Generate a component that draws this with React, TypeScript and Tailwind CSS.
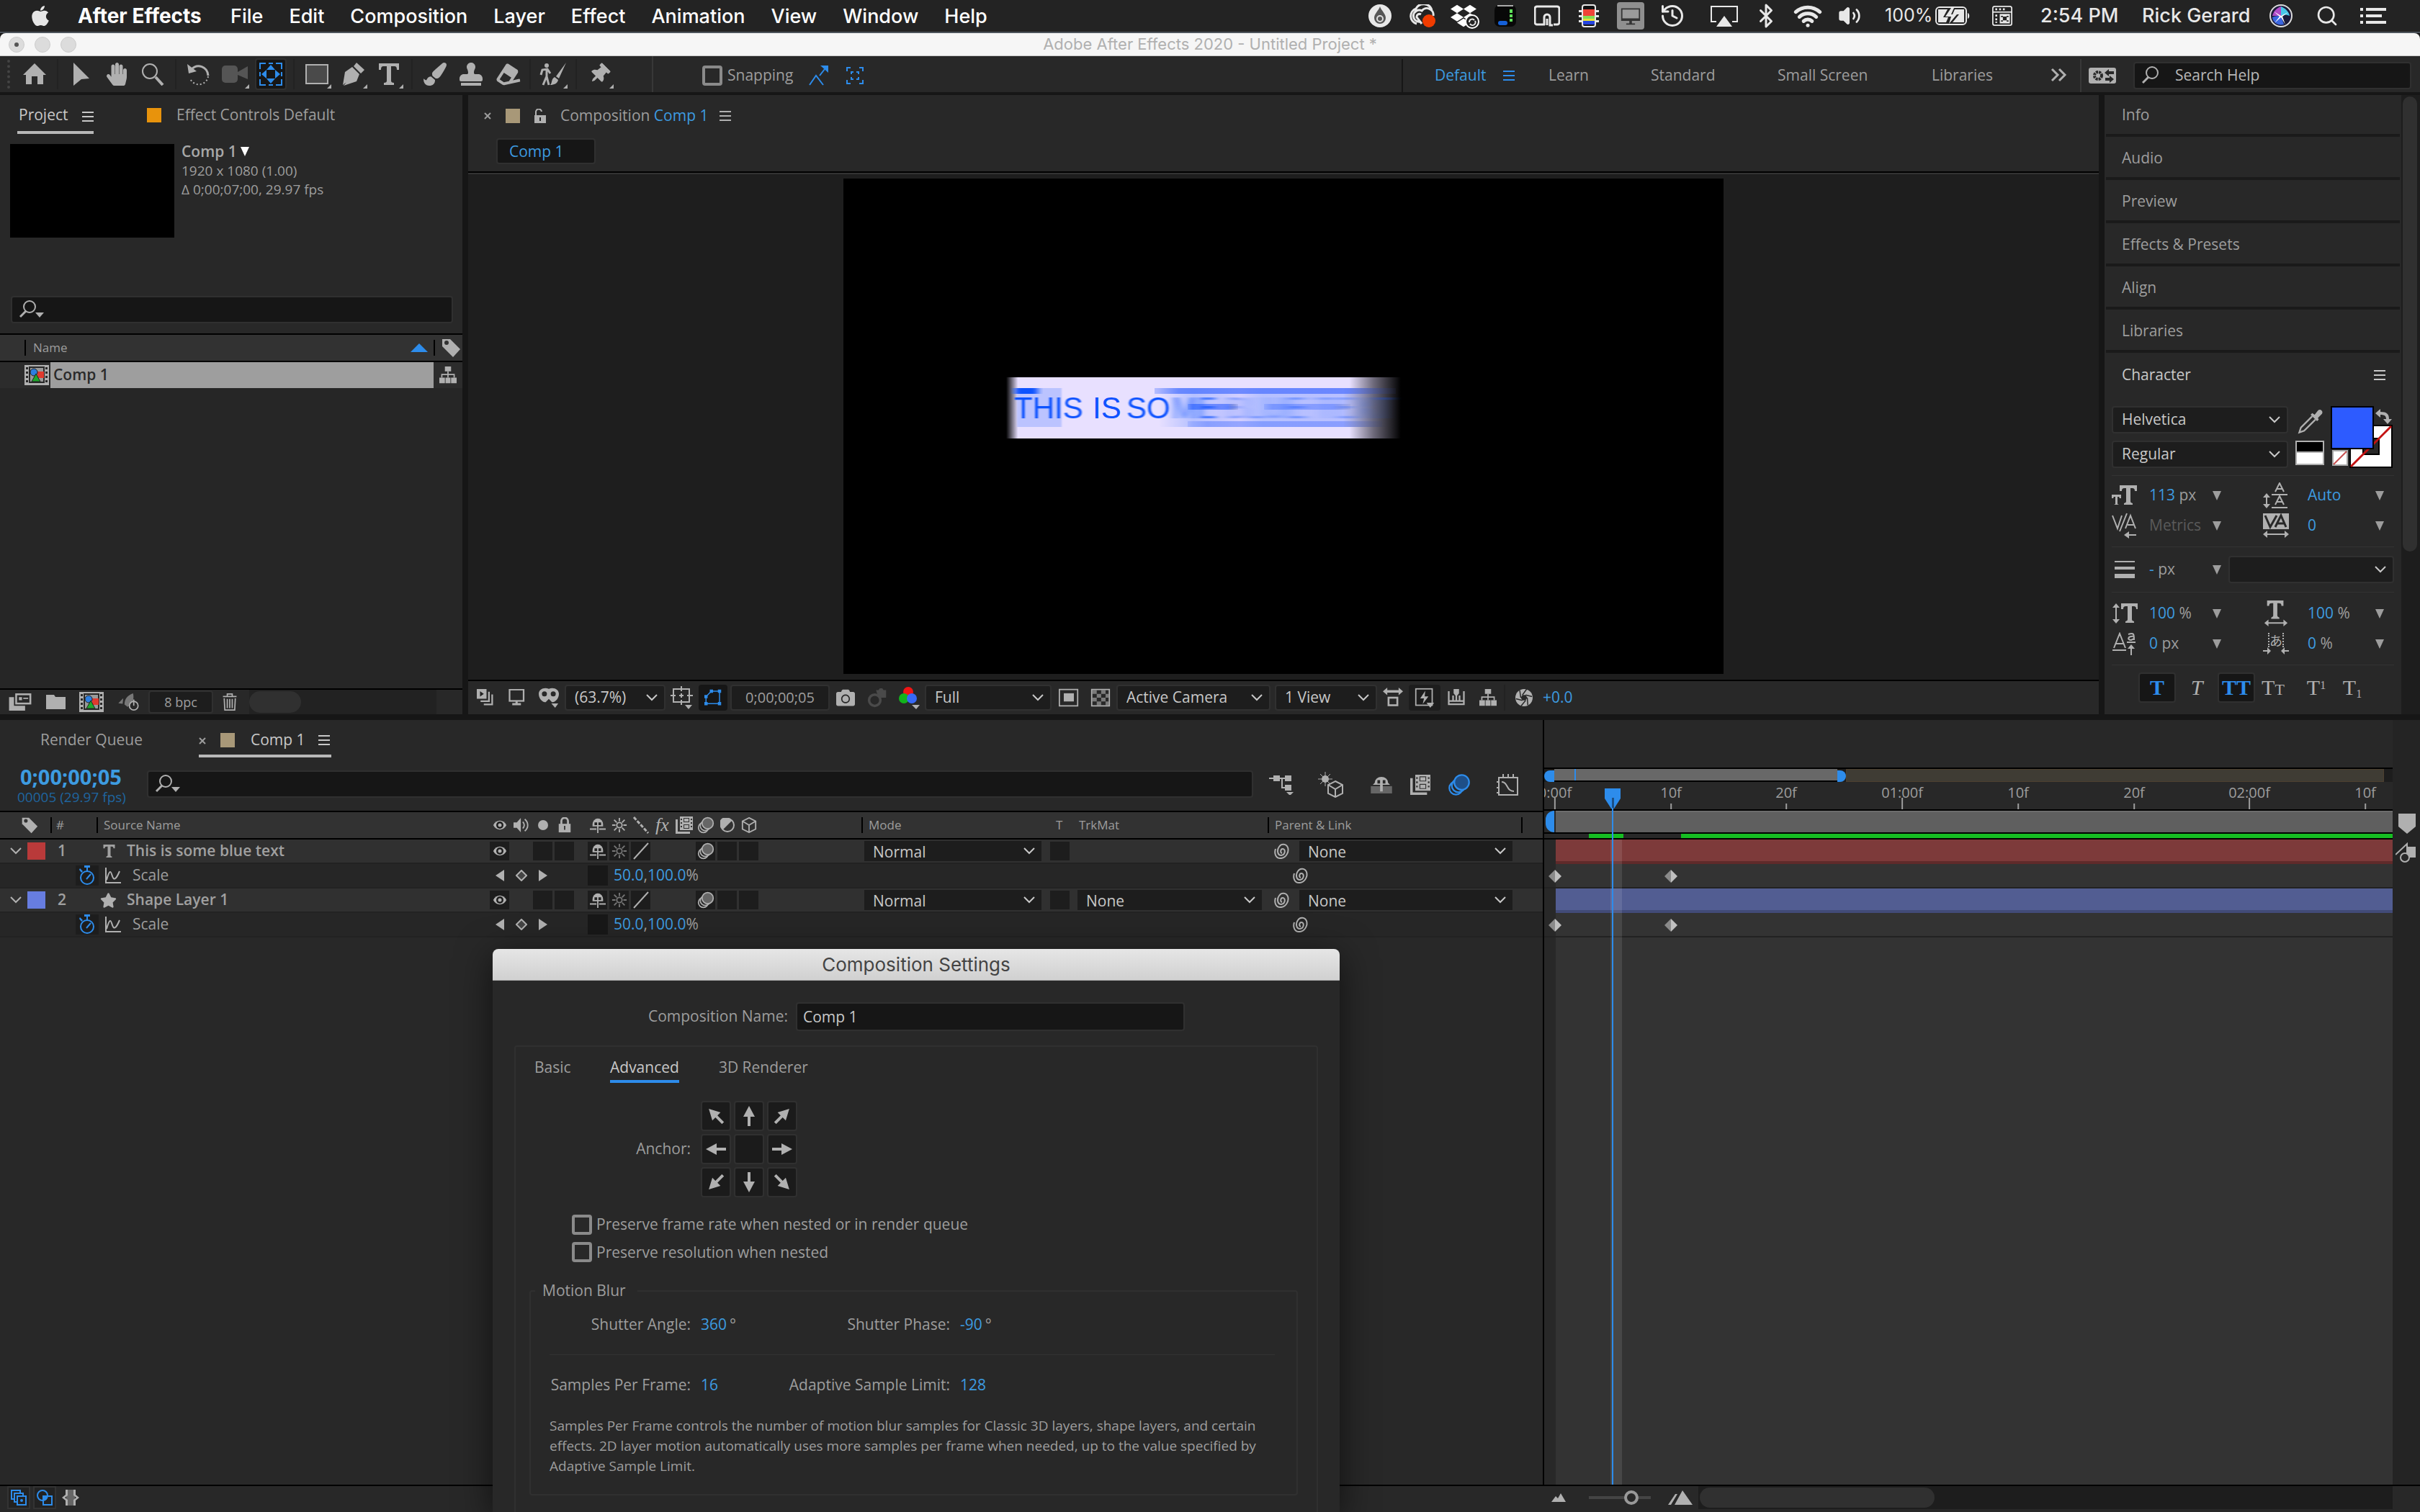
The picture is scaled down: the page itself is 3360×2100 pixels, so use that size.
import type { ReactNode } from "react";
import { Airplay, Bluetooth, History, Search, Volume2, Wifi } from "lucide-react";
import { FaApple, FaCamera, FaDropbox, FaEraser, FaHandPaper, FaPaintBrush, FaStamp, FaStar, FaThumbtack } from "react-icons/fa";

/* ---------- shared bits ---------- */

function Ico({ children, className = "size-8", box = "0 0 32 32" }: { children: ReactNode; className?: string; box?: string }) {
  return (
    <svg viewBox={box} className={`shrink-0 ${className}`} fill="currentColor" aria-hidden="true">
      {children}
    </svg>
  );
}

function Line({ d, w = 2, className = "" }: { d: string; w?: number; className?: string }) {
  return <path d={d} fill="none" stroke="currentColor" strokeWidth={w} className={className} />;
}

function Burger({ className = "" }: { className?: string }) {
  return (
    <Ico box="0 0 16 16" className={`size-4 ${className}`}>
      <path d="M0 1h16v2H0zM0 7h16v2H0zM0 13h16v2H0z" />
    </Ico>
  );
}

function Chevron({ className = "" }: { className?: string }) {
  return (
    <Ico box="0 0 16 16" className={`size-4 ${className}`}>
      <Line d="M1 4l7 7 7-7" />
    </Ico>
  );
}

function Down({ className = "w-3" }: { className?: string }) {
  return (
    <Ico box="0 0 12 13" className={`h-[13px] ${className}`}>
      <path d="M0 0h12L6 13z" />
    </Ico>
  );
}

function Dropdown({ label, value, className = "" }: { label: string; value: string; className?: string }) {
  return (
    <span className={`relative flex shrink-0 items-center bg-[#1d1d1d] text-[#c8c8c8] ${className}`}>
      <select aria-label={label} defaultValue={value} className="h-full w-full appearance-none bg-transparent pl-3 outline-none">
        <option>{value}</option>
      </select>
      <Chevron className="pointer-events-none absolute right-[9px]" />
    </span>
  );
}

function MagnifierIcon({ arrow = true }: { arrow?: boolean }) {
  return (
    <Ico box="0 0 36 28" className="h-7 w-9">
      <circle cx="14" cy="10" r="8" fill="none" stroke="currentColor" strokeWidth="2" />
      <Line d="M9 16L1 24" w={3} />
      {arrow && <path d="M22 18h12l-6 7z" />}
    </Ico>
  );
}

/* ---------- mac menu bar ---------- */

const menus = ["File", "Edit", "Composition", "Layer", "Effect", "Animation", "View", "Window", "Help"];

function StatusCell({ children, className = "" }: { children: ReactNode; className?: string }) {
  return <span className={`flex w-[58px] shrink-0 justify-center ${className}`}>{children}</span>;
}

function MenuBar() {
  return (
    <nav className="flex h-[46px] items-center border-b-2 border-[#4d545c] bg-[#232323] font-['Inter',sans-serif] text-[27px] text-white">
      <span className="flex w-[108px] pl-[40px]">
        <FaApple className="size-8 text-[#e6e6e6]" />
      </span>
      <div className="flex items-baseline gap-9">
        <button className="w-[176px] text-left text-[28px] font-bold whitespace-nowrap">After Effects</button>
        {menus.map((m) => (
          <button key={m} className="font-medium">
            {m}
          </button>
        ))}
      </div>
      <div className="ml-auto flex items-center pr-[42px] text-[#e8e8e8]">
        <StatusCell>
          <Ico>
            <circle cx="16" cy="16" r="16" />
            <path d="M16 3c2 6 8 10 8 16a8 8 0 0 1-16 0c0-6 6-10 8-16z" fill="#555" />
            <circle cx="16" cy="20" r="4" fill="none" stroke="#ddd" strokeWidth="2" />
          </Ico>
        </StatusCell>
        <StatusCell>
          <Ico className="h-8 w-10" box="0 0 40 32">
            <Line d="M18 24a8 8 0 1 1 2-15 9 9 0 0 1 16 7M13 27A11 11 0 0 1 12 6 12 12 0 0 1 34 8M20 27l-7-9a4 4 0 0 1 6-4" w={3} />
            <circle cx="30" cy="23" r="9" fill="#f03c00" />
          </Ico>
        </StatusCell>
        <StatusCell>
          <span className="relative flex">
            <FaDropbox className="size-9 text-white" />
            <Ico className="absolute -right-1 bottom-0 size-5" box="0 0 20 20">
              <circle cx="10" cy="10" r="9" fill="#232323" stroke="#fff" strokeWidth="2" />
              <Line d="M6 11a4 4 0 0 1 7-3M14 9a4 4 0 0 1-7 4" />
            </Ico>
          </span>
        </StatusCell>
        <StatusCell>
          <Ico>
            <rect x="1" y="1" width="30" height="30" rx="7" fill="#080808" />
            <path d="M5 1h22v2H5z" fill="#aaa" />
            <path d="M22 7h4v5h-4zM22 14h4v4h-4zM22 20h4v4h-4z" fill="#5fe05a" />
            <rect x="6" y="23" width="13" height="6" rx="3" fill="#1560d8" />
          </Ico>
        </StatusCell>
        <StatusCell>
          <Ico className="size-9" box="0 0 36 30">
            <Line d="M15 27H4a3 3 0 0 1-3-3V5a3 3 0 0 1 3-3h28a3 3 0 0 1 3 3v19a3 3 0 0 1-3 3h-5" w={3} />
            <Line d="M14 28V17a4 4 0 0 1 8 0M18 28v-9M22 17v11h4" w={3} />
          </Ico>
        </StatusCell>
        <StatusCell>
          <Ico>
            <path d="M2 8h28v3H2zM2 15h28v3H2zM2 22h28v3H2z" />
            <rect x="6" y="0" width="20" height="32" rx="4" />
            <rect x="8" y="2" width="16" height="28" rx="2" fill="#111" />
            <path d="M8 7h16v9H8z" fill="#f04438" />
            <path d="M8 16h16v4H8z" fill="#86dc52" />
            <path d="M8 20h16v3H8z" fill="#e6e23c" />
            <path d="M8 23h16v5H8z" fill="#2544e0" />
          </Ico>
        </StatusCell>
        <StatusCell>
          <span className="flex h-[38px] w-[38px] items-center justify-center rounded bg-[#8f8f8f] text-[#333]">
            <Ico className="size-7">
              <path d="M1 4h30v20H1z" />
              <path d="M3 6h26v14H3z" fill="#9b9b9b" />
              <path d="M14 24h4v4h5v2H9v-2h5z" />
            </Ico>
          </span>
        </StatusCell>
        <StatusCell>
          <History className="size-9" strokeWidth={2} />
        </StatusCell>
        <StatusCell className="ml-3.5">
          <Ico className="h-8 w-10" box="0 0 40 32">
            <Line d="M9 24H2V3h36v21h-7" />
            <path d="M20 16l11 15H9z" />
          </Ico>
        </StatusCell>
        <StatusCell>
          <Bluetooth className="size-9" strokeWidth={2} />
        </StatusCell>
        <StatusCell>
          <Wifi className="size-10" strokeWidth={3} />
        </StatusCell>
        <StatusCell>
          <Volume2 className="size-8 fill-current [&>path:not(:first-child)]:fill-none" strokeWidth={2} />
        </StatusCell>
        <span className="ml-5 w-[70px] text-[25px]">100%</span>
        <Ico className="h-7 w-12" box="0 0 48 28">
          <rect x="1" y="2" width="42" height="24" rx="5" fill="none" stroke="currentColor" strokeWidth="2" />
          <path d="M4 5h13l-6 11h7l-3 7H4zM27 5l-3 7h9l-9 11h16V5z" />
          <path d="M22 3l-8 12h8l-3 10 11-13h-8l4-9zM45 10c3 1 3 7 0 8z" />
        </Ico>
        <StatusCell className="ml-4">
          <Ico className="size-7">
            <rect x="1" y="1" width="30" height="30" rx="3" fill="none" stroke="currentColor" strokeWidth="2" />
            <Line d="M1 10h30" />
            <path d="M5 4h3v3H5zM11 4h3v3h-3zM17 4h3v3h-3zM5 14h3v3H5zM5 20h3v3H5zM5 25h3v2H5z" />
            <rect x="12" y="13" width="16" height="15" />
            <path d="M17 17h6v6h-6zM14 16h3v2h-3zM23 16h3v2h-3zM14 23h3v2h-3zM23 23h3v2h-3z" fill="#232323" />
          </Ico>
        </StatusCell>
        <span className="ml-6 w-[141px] font-medium">2:54 PM</span>
        <span className="w-[160px] font-medium whitespace-nowrap">Rick Gerard</span>
        <StatusCell className="mr-1.5 ml-1">
          <Ico>
            <circle cx="16" cy="16" r="15" fill="#1b1b3a" stroke="#dcdcdc" strokeWidth="2" />
            <path d="M16 3c7 3 11 8 12 13-4-2-8-2-12 0z" fill="#48c8e8" />
            <path d="M4 16c2-7 6-11 12-13v13z" fill="#b04ac8" />
            <path d="M4 18c5-2 8-2 12-2l4 12C11 30 5 25 4 18z" fill="#3a66e0" />
            <path d="M6 10l10 6 10-5-8 6 4 11-6-10-9 8 7-9z" fill="#fff" />
          </Ico>
        </StatusCell>
        <StatusCell>
          <Search className="size-8" strokeWidth={2} />
        </StatusCell>
        <StatusCell>
          <Ico className="ml-3 h-8 w-9" box="0 0 36 32">
            <path d="M0 5h4v4H0zM8 5h28v4H8zM0 14h4v4H0zM8 14h22v4H8zM0 23h4v4H0zM8 23h28v4H8z" />
          </Ico>
        </StatusCell>
      </div>
    </nav>
  );
}

/* ---------- tool bar ---------- */

function Tool({ name, children, on = false, corner = false }: { name: string; children: ReactNode; on?: boolean; corner?: boolean }) {
  return (
    <span className="flex w-[50px] shrink-0 justify-center">
      <button
        aria-label={name}
        className={`relative flex h-11 w-11 items-center justify-center rounded border-2 ${on ? "border-[#303030] bg-[#161616] text-[#2d8ceb]" : "border-transparent"}`}
      >
        {children}
        {corner && (
          <svg viewBox="0 0 6 6" className="absolute right-0 bottom-0 size-1.5" fill="currentColor">
            <path d="M6 0v6H0z" />
          </svg>
        )}
      </button>
    </span>
  );
}

function ToolSep() {
  return (
    <span className="flex w-[14px] shrink-0 justify-center">
      <span className="h-[42px] w-0.5 bg-[#222]" />
    </span>
  );
}

function ToolBar() {
  return (
    <div className="flex h-[54px] items-center border-b-4 border-[#161616] bg-[#282828] text-[#b0b0b0]">
      <span className="ml-2.5 h-10 w-1 border-l-4 border-dotted border-[#444]" />
      <span className="w-[9px]" />
      <Tool name="Home">
        <Ico>
          <path d="M16 1l16 16h-4v13h-8V19h-8v11H4V17H0z" />
        </Ico>
      </Tool>
      <ToolSep />
      <Tool name="Selection">
        <Ico>
          <path d="M6 0l22 22-11 1L6 32z" />
        </Ico>
      </Tool>
      <Tool name="Hand">
        <FaHandPaper className="size-8" />
      </Tool>
      <Tool name="Zoom">
        <Ico>
          <circle cx="12" cy="12" r="10" fill="none" stroke="currentColor" strokeWidth="2" />
          <Line d="M20 20l10 11" w={4} />
        </Ico>
      </Tool>
      <ToolSep />
      <Tool name="Rotation">
        <Ico>
          <Line d="M6 9c8-8 22-4 23 9" w={3} />
          <path d="M0 2l2 13 11-3z" />
          <path d="M29 19a13 13 0 0 1-25 3" fill="none" stroke="currentColor" strokeWidth="2" strokeDasharray="2 3" />
        </Ico>
      </Tool>
      <Tool name="Camera" corner>
        <Ico className="h-6 w-9 text-[#555]" box="0 0 36 24">
          <rect width="22" height="24" rx="5" />
          <path d="M22 9l14-8v18l-14-6z" />
        </Ico>
      </Tool>
      <Tool name="Pan Behind" on>
        <Ico>
          <path d="M1 9V1h8M13 1h6M23 1h8v8M31 13v6M31 23v8h-8M19 31h-6M9 31H1v-8M1 19v-6" fill="none" stroke="currentColor" strokeWidth="2" />
          <path d="M16 3l6 7H10zM16 29l6-7H10zM3 16l7-6v12zM29 16l-7-6v12z" />
        </Ico>
      </Tool>
      <ToolSep />
      <Tool name="Rectangle" corner>
        <Ico>
          <rect x="1" y="3" width="30" height="26" fill="#4a4a4a" stroke="currentColor" strokeWidth="2" />
        </Ico>
      </Tool>
      <Tool name="Pen" corner>
        <Ico>
          <path d="M21 0l11 10-5 5L17 5zM15 6l10 10-4 10-18 6 9-11a3 3 0 1 1 2 1L2 31 5 13z" />
        </Ico>
      </Tool>
      <Tool name="Type" corner>
        <Ico>
          <path d="M2 1h28v9h-3c0-4-1-5-4-5h-4v20c0 2 1 3 4 3v3H9v-3c3 0 4-1 4-3V5H9C6 5 5 6 5 10H2z" />
        </Ico>
      </Tool>
      <ToolSep />
      <Tool name="Brush">
        <FaPaintBrush className="size-8" />
      </Tool>
      <Tool name="Clone Stamp">
        <FaStamp className="size-8" />
      </Tool>
      <Tool name="Eraser">
        <FaEraser className="size-8 -rotate-12" />
      </Tool>
      <ToolSep />
      <Tool name="Roto Brush" corner>
        <Ico className="h-8 w-10" box="0 0 40 32">
          <circle cx="11" cy="4" r="3" />
          <Line d="M3 17l2-7 7-1 4 6M11 10v9l-5 12M11 19l3 12" w={3} />
          <path d="M38 0L24 19l4 3zM22 20l5 4c-1 5-6 7-11 7 3-3 1-8 6-11z" />
        </Ico>
      </Tool>
      <ToolSep />
      <Tool name="Puppet Pin" corner>
        <FaThumbtack className="size-7 rotate-45" />
      </Tool>
      <span className="ml-[48px] h-[50px] w-0.5 bg-[#383838]" />
      <label className="ml-[68px] flex items-center gap-[7px] pt-1 text-[21px] text-[#9d9d9d]">
        <input type="checkbox" className="size-7 appearance-none rounded border-4 border-[#8a8a8a]" />
        Snapping
      </label>
      <button aria-label="Snap to edges" className="ml-[22px] pt-1 text-[#2d8ceb]">
        <Ico className="size-7" box="0 0 28 28">
          <path d="M16 0h11v10z" />
          <Line d="M22 5l-7 9" />
          <Line d="M1 27l9-13 10 13" />
        </Ico>
      </button>
      <button aria-label="Snap to features" className="ml-6 pt-1 text-[#2d8ceb]">
        <Ico className="size-6" box="0 0 24 24">
          <Line d="M1 6V1h5M18 1h5v5M23 18v5h-5M6 23H1v-5M7 10V7h3M14 7h3v3M17 14v3h-3M10 17H7v-3" />
        </Ico>
      </button>

      <div className="ml-auto flex items-center pt-1 text-[21px] text-[#9d9d9d]">
        <span className="h-[46px] w-0.5 bg-[#161616]" />
        <button className="ml-[44px] flex w-[158px] items-center gap-6 text-[#3d9be0]">
          Default <Burger className="text-[#2d8ceb]" />
        </button>
        <button className="w-[142px] text-left">Learn</button>
        <button className="w-[176px] text-left">Standard</button>
        <button className="w-[214px] text-left whitespace-nowrap">Small Screen</button>
        <button className="w-[164px] text-left">Libraries</button>
        <button aria-label="More workspaces" className="w-[42px] text-[#b0b0b0]">
          <Ico className="size-6" box="0 0 24 20">
            <Line d="M3 1l8 8-8 8M13 1l8 8-8 8" w={3} />
          </Ico>
        </button>
        <span className="h-[46px] w-0.5 bg-[#383838]" />
        <button aria-label="Workspace settings" className="mx-[10px] w-[38px] text-[#b0b0b0]">
          <Ico className="h-[22px] w-[38px]" box="0 0 38 22">
            <rect width="38" height="22" rx="3" />
            <circle cx="13" cy="11" r="5" fill="none" stroke="#282828" strokeWidth="4" strokeDasharray="3 1" />
            <path d="M22 7l6-5v3h7v4h-7v3zM35 16l-6 5v-3h-6v-4h6v-3z" fill="#282828" />
          </Ico>
        </button>
        <label className="mr-3 ml-3.5 flex h-[38px] w-[386px] items-center rounded border-2 border-[#303030] bg-[#161616] pl-2.5 text-[#b0b0b0]">
          <MagnifierIcon arrow={false} />
          <input aria-label="Search Help" placeholder="Search Help" className="ml-2.5 w-full bg-transparent outline-none placeholder:text-[#b8b8b8]" />
        </label>
      </div>
    </div>
  );
}

/* ---------- project panel ---------- */

function CompIcon() {
  return (
    <Ico className="h-7 w-[34px]" box="0 0 34 28">
      <path d="M0 0h34v28H0z" />
      <path d="M2 3h3v3H2zM2 9h3v3H2zM2 15h3v3H2zM2 21h3v3H2zM29 3h3v3h-3zM29 9h3v3h-3zM29 15h3v3h-3zM29 21h3v3h-3z" fill="#282828" />
      <path d="M7 3h20v21H7z" fill="#9a9a9a" stroke="#282828" strokeWidth="2" />
      <path d="M18 9h9v9h-9z" fill="#e03a2e" />
      <circle cx="13" cy="10" r="5" fill="#2d7fe0" stroke="#222" />
      <path d="M16 12l6 11H10z" fill="#1fa82c" stroke="#222" />
    </Ico>
  );
}

function TagIcon({ className = "size-7" }: { className?: string }) {
  return (
    <Ico className={className} box="0 0 28 28">
      <path d="M2 2h11l14 14-10 11L2 12z" />
      <circle cx="8" cy="7" r="3" fill="#333" />
    </Ico>
  );
}

function FlowIcon() {
  return (
    <Ico className="size-6" box="0 0 28 28">
      <path d="M9 0h10v8H9zM0 18h9v9H0zM10 18h8v9h-8zM19 18h9v9h-9z" />
      <Line d="M14 8v10M4 18v-5h20v5" />
    </Ico>
  );
}

function ProjectPanel() {
  return (
    <section className="flex w-[642px] shrink-0 flex-col bg-[#282828]">
      <div className="flex h-[54px] items-end pl-6 text-[21px]">
        <button className="flex h-[42px] w-[106px] items-start justify-between border-b-4 border-[#b8b8b8] pl-0.5 text-[#c8c8c8]">
          Project <Burger className="mt-2.5" />
        </button>
        <button className="ml-[74px] flex h-[42px] items-start text-[#9d9d9d]">
          <span className="mt-1.5 mr-[21px] size-5 bg-[#e8930c]" />
          Effect Controls Default
        </button>
      </div>
      <div className="mt-3.5 flex gap-2.5 pl-3.5">
        <div className="h-[130px] w-[228px] bg-black" />
        <div className="text-[19px] leading-[26px] text-[#9d9d9d]">
          <h2 className="mb-1 flex h-5 items-center gap-1 text-[21px] font-semibold text-[#a8a8a8]">
            Comp 1 <Down className="w-3.5 text-white" />
          </h2>
          <p>1920 x 1080 (1.00)</p>
          <p>Δ 0;00;07;00, 29.97 fps</p>
        </div>
      </div>
      <label className="mt-[81px] mr-[13px] ml-[15px] flex h-[38px] items-center rounded border-2 border-[#303030] bg-[#161616] pl-2.5 text-[#b0b0b0]">
        <MagnifierIcon />
        <input aria-label="Search project" className="w-full bg-transparent outline-none" />
      </label>
      <div className="mt-3.5 flex h-10 items-center border-y-2 border-black bg-[#323232] text-[17px] text-[#9d9d9d]">
        <span className="ml-[34px] h-[22px] w-0.5 bg-black" />
        <span className="ml-2.5">Name</span>
        <Ico box="0 0 24 12" className="ml-auto h-3 w-6 text-[#2d8ceb]">
          <path d="M12 0l12 12H0z" />
        </Ico>
        <span className="mx-2 h-[22px] w-0.5 bg-black" />
        <span className="pr-0.5 text-[#b0b0b0]">
          <TagIcon />
        </span>
      </div>
      <div className="flex h-9 items-center bg-[#2c2c2c] pl-[34px] text-[#b0b0b0]">
        <CompIcon />
        <span className="ml-0.5 flex h-full flex-1 items-center bg-[#9e9e9e] pl-1 text-[21px] font-semibold text-[#2a2a2a]">Comp 1</span>
        <span className="w-10 pl-2">
          <FlowIcon />
        </span>
      </div>
      <div className="flex-1 bg-[#262626]" />
      <div className="flex h-9 items-center border-t-2 border-black text-[#b0b0b0]">
        <button aria-label="Interpret footage" className="ml-2.5 w-[54px]">
          <Ico className="h-6 w-9" box="0 0 36 28">
            <path d="M10 0h26v18H10z" />
            <path d="M13 3h20v12H13z" fill="#282828" />
            <path d="M16 6h5v5h-5zM23 7h8v2h-8zM0 6h8v14h18v8H0z" />
          </Ico>
        </button>
        <button aria-label="New folder" className="w-[46px]">
          <Ico className="h-5 w-7" box="0 0 28 20">
            <path d="M0 0h11l2 3h14v17H0z" />
          </Ico>
        </button>
        <button aria-label="New composition" className="w-[52px]">
          <CompIcon />
        </button>
        <button aria-label="Adjust interpretation" className="w-[44px] text-[#777]">
          <Ico className="h-6 w-8" box="0 0 36 28">
            <path d="M26 0c2 10-1 18-9 22l-5-4C12 9 17 3 26 0zM2 16l8-8-1 9zM19 24l2-5 2 5z" />
            <circle cx="27" cy="20" r="7" fill="#282828" stroke="#b0b0b0" strokeWidth="2" />
            <path d="M26 10h2v10h-2z" fill="#b0b0b0" />
          </Ico>
        </button>
        <button className="h-8 w-[90px] rounded border-2 border-[#303030] bg-[#1d1d1d] text-[18px] leading-none text-[#9d9d9d]">8 bpc</button>
        <button aria-label="Delete" className="mx-3">
          <Ico className="h-6 w-[22px]" box="0 0 22 28">
            <Line d="M0 5h22M7 5V1h8v4M2 8l1 19h16l1-19M7 9v15M11 9v15M15 9v15" />
          </Ico>
        </button>
        <span className="ml-1 h-full w-[260px] bg-[#222] py-0.5">
          <span className="block h-full w-[72px] rounded-full bg-[#303030]" />
        </span>
      </div>
    </section>
  );
}

/* ---------- composition viewer ---------- */

function BlurredTitle() {
  return (
    <svg viewBox="0 0 1222 688" className="h-[688px] w-[1222px] bg-black" role="img" aria-label="THIS IS SOME BLUE TEXT">
      <defs>
        <linearGradient id="plate">
          <stop offset="0" stopColor="#000" />
          <stop offset="0.03" stopColor="#e8e0ff" />
          <stop offset="0.87" stopColor="#e8e0ff" />
          <stop offset="0.93" stopColor="#6f6b7c" />
          <stop offset="1" stopColor="#000" />
        </linearGradient>
        <linearGradient id="smear">
          <stop offset="0" stopColor="#a9b8ff" stopOpacity="0" />
          <stop offset="0.15" stopColor="#a9b8ff" stopOpacity="0.8" />
          <stop offset="0.35" stopColor="#d0ccff" stopOpacity="0.9" />
          <stop offset="0.45" stopColor="#a9b8ff" stopOpacity="0.8" />
          <stop offset="0.8" stopColor="#b4bcff" stopOpacity="0.9" />
          <stop offset="1" stopColor="#1c2440" stopOpacity="0" />
        </linearGradient>
        <linearGradient id="streak">
          <stop offset="0" stopColor="#3f6bff" stopOpacity="0.3" />
          <stop offset="0.1" stopColor="#3f6bff" stopOpacity="0.7" />
          <stop offset="0.8" stopColor="#4a6fff" stopOpacity="0.7" />
          <stop offset="1" stopColor="#24357a" stopOpacity="0.1" />
        </linearGradient>
        <filter id="soft" x="-20%" width="140%">
          <feGaussianBlur stdDeviation="1 0" />
        </filter>
        <filter id="mid" x="-20%" width="140%">
          <feGaussianBlur stdDeviation="4 0" />
        </filter>
        <filter id="heavy" x="-20%" width="140%">
          <feGaussianBlur stdDeviation="8 0" />
        </filter>
      </defs>
      <rect x="226" y="276" width="548" height="85" fill="url(#plate)" />
      <rect x="241" y="291" width="62" height="54" fill="#a9b8ff" opacity="0.7" filter="url(#soft)" />
      <rect x="438" y="291" width="320" height="54" fill="url(#smear)" />
      <rect x="432" y="291" width="335" height="8" fill="url(#streak)" />
      <rect x="478" y="313" width="70" height="8" fill="url(#streak)" />
      <rect x="584" y="313" width="120" height="8" fill="url(#streak)" opacity="0.6" />
      <rect x="478" y="337" width="270" height="8" fill="url(#streak)" opacity="0.6" />
      <rect x="238" y="291" width="32" height="8" fill="#0f52ff" filter="url(#mid)" />
      <g fontFamily="'Liberation Sans', sans-serif" fontSize="42" fill="#0f52ff">
        <text x="237" y="333" filter="url(#soft)">
          THIS
        </text>
        <text x="346" y="333">
          IS
        </text>
        <text x="393" y="333" filter="url(#soft)">
          SO
        </text>
        <text x="456" y="333" filter="url(#mid)" opacity="0.6">
          ME
        </text>
        <text x="532" y="333" filter="url(#heavy)" opacity="0.4">
          BLUE
        </text>
        <text x="656" y="333" filter="url(#heavy)" opacity="0.3">
          TEXT
        </text>
      </g>
    </svg>
  );
}

function ViewerButton({ name, className = "w-11", children }: { name: string; className?: string; children: ReactNode }) {
  return (
    <button aria-label={name} className={`flex h-9 shrink-0 items-center justify-center ${className}`}>
      {children}
    </button>
  );
}

function CompositionPanel() {
  return (
    <section className="flex min-w-0 flex-1 flex-col bg-[#282828]">
      <div className="flex h-[57px] items-center pl-[22px] text-[21px] text-[#9d9d9d]">
        <button aria-label="Close panel" className="w-[30px] text-left">
          <Ico box="0 0 10 10" className="size-2.5">
            <Line d="M1 1l8 8M9 1l-8 8" />
          </Ico>
        </button>
        <span className="size-5 bg-[#a89878]" />
        <Ico box="0 0 16 20" className="mx-5 h-5 w-4 text-[#b0b0b0]">
          <path d="M0 9h16v11H0z" />
          <Line d="M2 10V5a4 4 0 0 1 8-1" />
          <path d="M7 12h2v5H7z" fill="#222" />
        </Ico>
        <span>
          Composition <span className="text-[#3d9be0]">Comp 1</span>
        </span>
        <Burger className="ml-4 text-[#b0b0b0]" />
      </div>
      <div className="flex h-[51px] items-start border-b-2 border-black pt-[3px] pl-[39px]">
        <button className="h-9 w-[138px] rounded border-2 border-[#303030] bg-[#161616] pl-4 text-left text-[21px] leading-8 text-[#3d9be0]">Comp 1</button>
      </div>
      <div className="flex justify-center border-t-2 border-[#333] bg-[#1e1e1e] pt-[6px] pb-[8px]">
        <BlurredTitle />
      </div>
      <div className="flex h-12 items-center border-t-2 border-black pl-0.5 text-[21px] text-[#b0b0b0]">
        <ViewerButton name="Always preview this view">
          <Ico className="size-6">
            <path d="M0 0h18v18H0zM21 5h3v19H7v-3h14zM27 10h3v20H13v-3h14z" />
            <path d="M6 4l7 5-7 5z" fill="#222" />
          </Ico>
        </ViewerButton>
        <ViewerButton name="Primary viewer">
          <Ico className="size-6">
            <rect x="2" y="1" width="26" height="21" fill="none" stroke="currentColor" strokeWidth="3" />
            <path d="M13 22h4v4h6v4H7v-4h6z" />
          </Ico>
        </ViewerButton>
        <ViewerButton name="VR view">
          <Ico className="size-7">
            <path d="M16 2c8-3 16 1 16 8s-6 14-11 13l-5-5-5 5C6 24 0 17 0 10S8-1 16 2z" />
            <circle cx="9" cy="10" r="4" fill="#282828" />
            <circle cx="23" cy="10" r="4" fill="#282828" />
            <path d="M20 25h11l-5 7z" />
          </Ico>
        </ViewerButton>
        <Dropdown label="Magnification" value="(63.7%)" className="h-9 w-[140px] rounded border-2 border-[#303030]" />
        <ViewerButton name="Grid and guides" className="w-[46px]">
          <Ico>
            <rect x="4" y="4" width="22" height="18" fill="none" stroke="currentColor" strokeWidth="2" />
            <Line d="M0 13h7M23 13h8M15 0v7M15 19v7M15 10v6M12 13h6" />
            <path d="M20 26h10l-5 6z" />
          </Ico>
        </ViewerButton>
        <span className="rounded bg-[#161616] text-[#2d8ceb]">
          <ViewerButton name="Mask visibility" className="w-10">
            <Ico className="size-6">
              <Line d="M3 27V14L13 4h15v23z" />
              <path d="M0 24h6v6H0zM25 24h6v6h-6zM25 1h6v6h-6zM10 1h6v6h-6zM0 11h6v6H0z" />
            </Ico>
          </ViewerButton>
        </span>
        <button className="ml-1 h-9 w-[138px] rounded border-2 border-[#303030] bg-[#1d1d1d] text-[20px] text-[#9d9d9d]">0;00;00;05</button>
        <ViewerButton name="Take snapshot">
          <FaCamera className="size-[26px]" />
        </ViewerButton>
        <span className="text-[#4a4a4a]">
          <ViewerButton name="Show snapshot">
            <Ico className="size-7">
              <circle cx="12" cy="20" r="9" fill="none" stroke="currentColor" strokeWidth="4" />
              <path d="M14 4h4l2-3h4l2 3h4v12h-8l-6-6z" />
            </Ico>
          </ViewerButton>
        </span>
        <ViewerButton name="Show channel">
          <Ico>
            <circle cx="15" cy="8" r="7" fill="#f01414" />
            <circle cx="9" cy="17" r="7" fill="#12b31c" />
            <circle cx="20" cy="17" r="7" fill="#3768f5" />
            <path d="M20 26h11l-5 6z" />
          </Ico>
        </ViewerButton>
        <Dropdown label="Resolution" value="Full" className="h-9 w-[176px] rounded border-2 border-[#303030]" />
        <ViewerButton name="Region of interest" className="ml-0.5 w-11">
          <Ico className="size-7">
            <rect x="1" y="3" width="29" height="26" fill="none" stroke="currentColor" strokeWidth="2" />
            <path d="M8 9h16v13H8z" />
          </Ico>
        </ViewerButton>
        <ViewerButton name="Transparency grid">
          <Ico className="size-7">
            <rect x="2" y="3" width="28" height="26" fill="none" stroke="currentColor" strokeWidth="2" />
            <path d="M3 4h7v6H3zM17 4h7v6h-7zM10 10h7v6h-7zM24 10h5v6h-5zM3 16h7v6H3zM17 16h7v6h-7zM10 22h7v6h-7zM24 22h5v6h-5z" opacity=".6" />
          </Ico>
        </ViewerButton>
        <Dropdown label="3D view" value="Active Camera" className="h-9 w-[214px] rounded border-2 border-[#303030]" />
        <Dropdown label="View layout" value="1 View" className="ml-1.5 h-9 w-[142px] rounded border-2 border-[#303030]" />
        <ViewerButton name="Pixel aspect ratio">
          <Ico className="size-7">
            <path d="M0 6l7-6v4h18V0l7 6-7 6V8H7v4z" />
            <rect x="9" y="16" width="14" height="12" fill="none" stroke="currentColor" strokeWidth="3" />
          </Ico>
        </ViewerButton>
        <span className="rounded bg-[#1d1d1d]">
          <ViewerButton name="Fast previews">
            <Ico className="size-7">
              <rect x="2" y="2" width="26" height="26" fill="none" stroke="currentColor" strokeWidth="2" />
              <path d="M17 5L9 17h6l-2 9 9-12h-6zM19 24h12l-6 8z" />
            </Ico>
          </ViewerButton>
        </span>
        <ViewerButton name="Timeline">
          <Ico className="size-6">
            <Line d="M2 4v24h28V4M2 22h28M10 22V12M22 22V12M16 22V10" w={3} />
            <path d="M11 0h10v8l-5 6-5-6z" />
          </Ico>
        </ViewerButton>
        <ViewerButton name="Comp flowchart">
          <FlowIcon />
        </ViewerButton>
        <span className="h-9 w-0.5 bg-[#222]" />
        <ViewerButton name="Reset exposure" className="w-[52px]">
          <Ico className="size-6">
            <circle cx="16" cy="16" r="16" />
            <path d="M22 16l-3 5h-6l-3-5 3-5h6z" fill="#282828" />
            <path d="M13 11L21 0M19 11l12 3M22 16l1 14M19 21L10 32M13 21L1 18M10 16L8 2" fill="none" stroke="#282828" strokeWidth="2" />
          </Ico>
        </ViewerButton>
        <button className="text-[#3d9be0]">+0.0</button>
      </div>
    </section>
  );
}

/* ---------- right column ---------- */

const closedPanels = ["Audio", "Preview", "Effects & Presets", "Align", "Libraries"];

interface CharFieldProps {
  icon: ReactNode;
  value: string;
  unit?: string;
  name: string;
  dim?: boolean;
  wide?: boolean;
}

function CharField({ icon, value, unit = "", name, dim = false, wide = false }: CharFieldProps) {
  return (
    <div className="flex h-[42px] items-center text-[21px] text-[#9d9d9d]">
      <span className={`text-[#b0b0b0] ${wide ? "w-[62px]" : "w-[52px]"}`}>{icon}</span>
      <button aria-label={name} className={`flex-1 text-left ${dim ? "text-[#5a5a5a]" : ""}`}>
        <span className={dim ? "" : "text-[#3d9be0]"}>{value}</span> {unit}
      </button>
      <Down />
    </div>
  );
}

function CharRow({ children }: { children: ReactNode }) {
  return <div className="grid grid-cols-[152px_168px] justify-between pr-3.5">{children}</div>;
}

const serifT = "M0 0h24v8h-3c0-3-1-4-4-4h-2v18c0 2 1 2 3 3v2H6v-2c2-1 3-1 3-3V4H7C4 4 3 5 3 8H0z";

function CharacterPanel() {
  return (
    <div className="flex flex-1 flex-col px-2.5">
      <div className="flex h-[62px] items-center justify-between pr-3 pl-3.5 text-[21px] text-[#c8c8c8]">
        Character <Burger />
      </div>
      <div className="mt-3 flex justify-between">
        <div className="flex flex-col gap-2.5">
          <Dropdown label="Font family" value="Helvetica" className="h-[38px] w-[245px] rounded border-2 border-[#303030]" />
          <Dropdown label="Font style" value="Regular" className="h-[38px] w-[245px] rounded border-2 border-[#303030]" />
        </div>
        <div className="flex w-10 flex-col items-center gap-2 text-[#b0b0b0]">
          <Ico className="mt-1 size-9">
            <path d="M22 7l4-5c3-3 7 1 5 4l-5 5 1 2-2 2-8-8 2-2z" />
            <Line d="M19 9L5 23l-2 6 6-2 14-14" />
          </Ico>
          <span className="h-[34px] w-10 border-2 border-[#b0b0b0] bg-white">
            <span className="block h-[15px] w-full border-b-2 border-[#b0b0b0] bg-black" />
          </span>
        </div>
        <svg viewBox="0 0 88 88" className="size-[88px]" aria-hidden="true">
          <rect x="27" y="27" width="58" height="58" fill="#fff" stroke="#000" strokeWidth="2" />
          <rect x="45" y="45" width="22" height="22" fill="#282828" stroke="#000" strokeWidth="2" />
          <path d="M28 84L84 28" stroke="#c41212" strokeWidth="3" />
          <rect x="1" y="1" width="58" height="58" fill="#2d5bff" stroke="#000" strokeWidth="2" />
          <rect x="3" y="62" width="20" height="20" fill="#fff" stroke="#aaa" strokeWidth="2" />
          <path d="M4 81l18-18" stroke="#c85050" strokeWidth="2" />
          <path d="M62 10l7-6v4c9 0 12 3 12 10h4l-6 7-6-7h4c0-4-2-6-8-6v4z" fill="#b0b0b0" />
        </svg>
      </div>
      <hr className="mt-2 border-[#333]" />
      <div className="pt-1.5">
        <CharRow>
          <CharField
            name="Font size"
            value="113"
            unit="px"
            icon={
              <Ico className="h-7 w-9" box="0 0 36 28">
                <path d={serifT} transform="translate(11 0)" />
                <path d="M0 13h13v5h-2l-1-2H8v10l2 1H3l2-1V16H3l-1 2H0z" />
              </Ico>
            }
          />
          <CharField
            name="Leading"
            value="Auto"
            wide
            icon={
              <Ico className="h-9 w-9" box="0 0 36 36">
                <Line d="M12 17h22M12 35h22M17 13l6-12 6 12M19 9h8M17 31l6-12 6 12M19 27h8M5 20v12" />
                <path d="M5 15l5 6H0zM5 36l5-6H0z" />
              </Ico>
            }
          />
          <CharField
            name="Kerning"
            value="Metrics"
            dim
            icon={
              <Ico className="h-9 w-9" box="0 0 36 36">
                <Line d="M1 4l7 18 6-18M11 26L21 1M19 22l7-18 7 18M22 17h9M22 31h12" />
                <path d="M24 26v10l-7-5z" />
              </Ico>
            }
          />
          <CharField
            name="Tracking"
            value="0"
            wide
            icon={
              <Ico className="h-9 w-9" box="0 0 36 36">
                <path d="M0 1h36v22H0z" />
                <path d="M3 4l7 16 9-16M17 20l8-16 7 16M20 15h9" stroke="#282828" strokeWidth="3" fill="none" />
                <path d="M0 30l6-5v4h24v-4l6 5-6 5v-4H6v4z" />
              </Ico>
            }
          />
        </CharRow>
      </div>
      <hr className="mt-2 border-[#333]" />
      <div className="my-2.5 flex items-center justify-between">
        <div className="w-[152px]">
          <CharField
            name="Stroke width"
            value="-"
            unit="px"
            icon={
              <Ico className="ml-1 size-7" box="0 0 28 28">
                <path d="M0 2h28v2H0zM0 10h28v4H0zM0 20h28v6H0z" />
              </Ico>
            }
          />
        </div>
        <Dropdown label="Stroke order" value="" className="h-[38px] w-[230px] rounded border-2 border-[#303030]" />
      </div>
      <hr className="border-[#333]" />
      <div className="pt-2">
        <CharRow>
          <CharField
            name="Vertical scale"
            value="100"
            unit="%"
            icon={
              <Ico className="h-7 w-9" box="0 0 36 28">
                <path d={serifT} transform="translate(13 0)" />
                <path d="M6 0l5 6H7v16h4l-5 6-5-6h4V6H1z" />
              </Ico>
            }
          />
          <CharField
            name="Horizontal scale"
            value="100"
            unit="%"
            wide
            icon={
              <Ico className="h-9 w-9" box="0 0 36 38">
                <path d={serifT} transform="translate(5 0)" />
                <path d="M1 33l6-5v4h22v-4l6 5-6 5v-4H7v4z" />
              </Ico>
            }
          />
          <CharField
            name="Baseline shift"
            value="0"
            unit="px"
            icon={
              <Ico className="h-8 w-9" box="0 0 36 32">
                <Line d="M3 22l8-20 8 20M6 16h11M1 25h19M21 14h12M27 20v12" />
                <Line d="M23 3c8-3 8 0 8 8M31 6c-9-1-10 5-4 5l4-2" />
                <path d="M27 17l5 6H22z" />
              </Ico>
            }
          />
          <CharField
            name="Tsume"
            value="0"
            unit="%"
            wide
            icon={
              <span className="flex w-9 flex-col items-center">
                <span className="border-x-2 border-dotted border-[#b0b0b0] font-['Noto_Sans_CJK_JP',sans-serif] text-[18px] leading-5">あ</span>
                <Ico className="h-2.5 w-9" box="0 0 36 10">
                  <path d="M0 4h6V0l5 5-5 5V6H0zM36 4h-6V0l-5 5 5 5V6h6z" />
                </Ico>
              </span>
            }
          />
        </CharRow>
      </div>
      <hr className="mt-2 border-[#333]" />
      <div className="mt-2.5 flex items-center pl-[37px] font-['Liberation_Serif',serif] text-[30px] leading-none text-[#b0b0b0]">
        <button className="h-[42px] w-[52px] rounded border-2 border-[#303030] bg-[#161616] font-bold text-[#2d8ceb]">T</button>
        <button className="w-[58px] italic">T</button>
        <button className="h-[42px] w-[52px] rounded border-2 border-[#303030] bg-[#161616] font-bold text-[#2d8ceb]">TT</button>
        <button className="w-[50px]">
          T<span className="text-[22px]">T</span>
        </button>
        <button className="ml-2.5 w-[50px]">
          T<sup className="text-[16px]">1</sup>
        </button>
        <button className="w-[50px]">
          T<sub className="text-[16px]">1</sub>
        </button>
      </div>
    </div>
  );
}

function RightColumn() {
  return (
    <aside className="flex w-[438px] shrink-0 bg-[#1d1d1d]">
      <div className="flex w-[412px] flex-col bg-[#282828] text-[21px] text-[#9d9d9d]">
        <button className="mx-0.5 flex h-[58px] items-center border-b-4 border-[#1a1a1a] pt-0.5 pl-[22px]">Info</button>
        {closedPanels.map((p) => (
          <button key={p} className="mx-0.5 flex h-[60px] items-center border-b-4 border-[#1a1a1a] pt-1 pl-[22px]">
            {p}
          </button>
        ))}
        <CharacterPanel />
      </div>
      <div className="w-6 px-0.5">
        <div className="mt-0.5 h-[632px] rounded-full bg-[#303030]" />
      </div>
    </aside>
  );
}

/* ---------- timeline: layer list ---------- */

const rowGrid = "grid grid-cols-[38px_32px_64px_546px_136px_380px_258px_34px_272px_382px] items-center";

function EyeIcon() {
  return (
    <Ico className="h-5 w-[22px]" box="0 0 22 24">
      <path d="M0 12c5-10 17-10 22 0-5 10-17 10-22 0z" />
      <circle cx="11" cy="12" r="6" fill="#1d1d1d" />
      <circle cx="11" cy="12" r="3" />
    </Ico>
  );
}

function ShyIcon() {
  return (
    <Ico className="size-[22px]" box="0 0 24 24">
      <path d="M4 11a8 9 0 0 1 16 0v3H4z" />
      <path d="M7 8h4v4H7zM13 8h4v4h-4z" fill="#222" />
      <path d="M0 17h10v2H0zM14 17h10v2H14zM11 12h2v12h-2z" />
    </Ico>
  );
}

function SunIcon() {
  return (
    <Ico className="size-[22px]" box="0 0 24 24">
      <circle cx="12" cy="12" r="4" fill="none" stroke="currentColor" strokeWidth="2" />
      <Line d="M12 1v5M12 18v5M1 12h5M18 12h5M4 4l4 4M16 16l4 4M20 4l-4 4M8 16l-4 4" />
    </Ico>
  );
}

function CirclesIcon({ className = "size-7", fill = "#666" }: { className?: string; fill?: string }) {
  return (
    <Ico className={className} box="0 0 28 28">
      <circle cx="10" cy="18" r="8" fill="none" stroke="currentColor" strokeWidth="2" />
      <circle cx="13" cy="15" r="8" fill="#282828" stroke="currentColor" strokeWidth="2" />
      <circle cx="17" cy="11" r="9" fill={fill} stroke="currentColor" strokeWidth="2" />
    </Ico>
  );
}

function CubeIcon() {
  return (
    <Ico className="size-[22px]" box="0 0 24 24">
      <Line d="M12 1l10 5v12l-10 5-10-5V6zM2 6l10 6 10-6M12 12v11" />
    </Ico>
  );
}

function FilmIcon({ className = "size-6" }: { className?: string }) {
  return (
    <Ico className={className} box="0 0 24 24">
      <path d="M6 0h18v19H6zM0 4h3v17h17v3H0z" />
      <path d="M11 2h8v6h-8zM11 11h8v6h-8zM7 3h2v2H7zM7 8h2v2H7zM7 13h2v2H7zM21 3h2v2h-2zM21 8h2v2h-2zM21 13h2v2h-2z" fill="#333" />
      <path d="M12 3h6v4h-6zM12 12h6v4h-6z" />
    </Ico>
  );
}

function SpiralIcon() {
  return (
    <Ico className="size-6" box="0 0 24 24">
      <Line d="M12 15c-3-1-2-6 1-6 4 0 4 8-2 9-6 0-6-8-3-12 3-5 10-4 12 1 2 6-2 14-9 15C3 23 1 15 3 9" />
    </Ico>
  );
}

function Cell({ children, filled = true }: { children?: ReactNode; filled?: boolean }) {
  return <span className={`flex h-[26px] w-[27px] items-center justify-center ${filled ? "bg-[#1d1d1d]" : ""}`}>{children}</span>;
}

function ListHeader() {
  return (
    <div className={`${rowGrid} h-10 border-y-2 border-black bg-[#323232] text-[17px] text-[#9d9d9d]`}>
      <span className="col-span-2 flex pl-[29px] text-[#b0b0b0]">
        <TagIcon className="size-6" />
      </span>
      <span className="border-l-2 border-black pl-1.5 leading-[22px]">#</span>
      <span className="border-l-2 border-black pl-2 leading-[22px]">Source Name</span>
      <span className="flex items-center gap-[3px] text-[#b0b0b0]">
        <Cell filled={false}>
          <EyeIcon />
        </Cell>
        <Cell filled={false}>
          <Ico className="size-[22px]" box="0 0 24 24">
            <path d="M0 8h5l6-7v22l-6-7H0z" />
            <Line d="M14 7c3 3 3 7 0 10M17 3c6 5 6 13 0 18" />
          </Ico>
        </Cell>
        <Cell filled={false}>
          <span className="size-3.5 rounded-full bg-[#b0b0b0]" />
        </Cell>
        <Cell filled={false}>
          <Ico className="h-[22px] w-[18px]" box="0 0 18 24">
            <path d="M0 10h18v13H0z" />
            <Line d="M4 11V6a5 5 0 0 1 10 0v5" w={3} />
            <path d="M8 13h2v6H8z" fill="#333" />
          </Ico>
        </Cell>
      </span>
      <span className="flex items-center gap-[3px] text-[#b0b0b0]">
        <Cell filled={false}>
          <ShyIcon />
        </Cell>
        <Cell filled={false}>
          <SunIcon />
        </Cell>
        <Cell filled={false}>
          <Ico className="size-6" box="0 0 24 24">
            <path d="M2 1l20 22" stroke="currentColor" strokeWidth="3" strokeDasharray="5 2" />
          </Ico>
        </Cell>
        <Cell filled={false}>
          <span className="font-['Liberation_Serif',serif] text-[26px] leading-6 italic">fx</span>
        </Cell>
        <Cell filled={false}>
          <FilmIcon />
        </Cell>
        <Cell filled={false}>
          <CirclesIcon className="size-6" />
        </Cell>
        <Cell filled={false}>
          <Ico className="size-5" box="0 0 20 20">
            <circle cx="10" cy="10" r="9" fill="none" stroke="currentColor" strokeWidth="2" />
            <path d="M16 4A9 9 0 1 0 4 16z" />
          </Ico>
        </Cell>
        <Cell filled={false}>
          <CubeIcon />
        </Cell>
      </span>
      <span className="border-l-2 border-black pl-2 leading-[22px]">Mode</span>
      <span className="pl-3">T</span>
      <span className="pl-2.5">TrkMat</span>
      <span className="mr-[28px] border-x-2 border-black pl-2 leading-[22px]">Parent &amp; Link</span>
    </div>
  );
}

interface Layer {
  index: number;
  name: string;
  swatch: string;
  bar: string;
  kind: "text" | "shape";
  matte: boolean;
}

const layers: Layer[] = [
  { index: 1, name: "This is some blue text", swatch: "bg-[#b93a3a]", bar: "bg-[#7d3a3a] border-[#5f2a2a]", kind: "text", matte: false },
  { index: 2, name: "Shape Layer 1", swatch: "bg-[#677de0]", bar: "bg-[#525d92] border-[#424b78]", kind: "shape", matte: true },
];

function LayerRow({ layer }: { layer: Layer }) {
  return (
    <div className={`${rowGrid} h-[34px] border-b-2 border-[#222] bg-[#303030] text-[21px] text-[#b0b0b0]`}>
      <button aria-label="Collapse layer" className="pl-3.5">
        <Chevron />
      </button>
      <span className={`h-6 w-[25px] ${layer.swatch}`} />
      <span className="pl-2.5 font-semibold text-[#a0a0a0]">{layer.index}</span>
      <span className="flex items-center gap-3.5 pl-[5px] font-semibold text-[#a0a0a0]">
        {layer.kind === "text" ? (
          <Ico className="ml-[2px] h-[18px] w-[21px]" box="0 0 24 27">
            <path d={serifT} />
          </Ico>
        ) : (
          <FaStar className="size-[23px] text-[#b0b0b0]" />
        )}
        {layer.name}
      </span>
      <span className="flex items-center gap-[3px]">
        <Cell>
          <EyeIcon />
        </Cell>
        <Cell filled={false} />
        <Cell />
        <Cell />
      </span>
      <span className="flex items-center gap-[3px]">
        <Cell>
          <ShyIcon />
        </Cell>
        <Cell>
          <span className="text-[#777]">
            <SunIcon />
          </span>
        </Cell>
        <Cell>
          <Ico className="size-6" box="0 0 24 24">
            <Line d="M2 23L22 1" />
          </Ico>
        </Cell>
        <Cell filled={false} />
        <Cell filled={false} />
        <Cell>
          <CirclesIcon className="size-6" />
        </Cell>
        <Cell />
        <Cell />
      </span>
      <span className="pl-1">
        <Dropdown label={`Mode of ${layer.name}`} value="Normal" className="h-7 w-[246px]" />
      </span>
      <span className="h-[26px] w-[27px] justify-self-center bg-[#1d1d1d]" />
      <span className="pl-2">{layer.matte && <Dropdown label="Track matte" value="None" className="h-7 w-[256px]" />}</span>
      <span className="flex items-center gap-3 pl-2">
        <SpiralIcon />
        <Dropdown label={`Parent of ${layer.name}`} value="None" className="h-7 w-[296px]" />
      </span>
    </div>
  );
}

function ScaleRow() {
  return (
    <div className={`${rowGrid} h-[34px] border-b-2 border-[#222] bg-[#262626] text-[21px] text-[#9d9d9d]`}>
      <span className="col-span-2" />
      <button aria-label="Stopwatch" className="mr-[-3px] justify-self-end bg-[#1d1d1d] px-1 text-[#2d8ceb]">
        <Ico className="h-7 w-6" box="0 0 24 28">
          <circle cx="12" cy="17" r="9" fill="none" stroke="currentColor" strokeWidth="2" />
          <path d="M8 0h8v3h-3v5h-2V3H8zM2 4l4 4-2 2-3-4z" />
          <Line d="M11 19l6-7" />
        </Ico>
      </button>
      <span className="flex items-center gap-4 pl-3">
        <Ico className="size-[22px] text-[#b0b0b0]" box="0 0 22 22">
          <Line d="M1 0v21h21M2 17C7 0 8 6 10 12s5 5 10-7" />
        </Ico>
        Scale
      </span>
      <span className="flex items-center gap-[3px] text-[#b0b0b0]">
        <Cell filled={false}>
          <Ico className="size-4" box="0 0 16 16">
            <path d="M14 0v16L2 8z" />
          </Ico>
        </Cell>
        <Cell filled={false}>
          <Ico className="size-4" box="0 0 16 16">
            <path d="M8 1l7 7-7 7-7-7z" fill="#444" stroke="currentColor" strokeWidth="2" />
          </Ico>
        </Cell>
        <Cell filled={false}>
          <Ico className="size-4" box="0 0 16 16">
            <path d="M2 0v16l12-8z" />
          </Ico>
        </Cell>
      </span>
      <span className="flex items-center gap-2">
        <span className="h-7 w-7 bg-[#181818]" />
        <span>
          <span className="text-[#3d9be0]">50.0</span>,<span className="text-[#3d9be0]">100.0</span>%
        </span>
      </span>
      <span className="col-span-3" />
      <span className="pl-[34px] text-[#b0b0b0]">
        <SpiralIcon />
      </span>
    </div>
  );
}

/* ---------- timeline: tracks ---------- */

// Pixel position of a frame on the zoomed ruler.
const frameX = (frame: number) => Math.round(15 + frame * 16.07);

const ruler = ["0:00f", "10f", "20f", "01:00f", "10f", "20f", "02:00f", "10f"];

function Keyframe({ frame }: { frame: number }) {
  return (
    <svg viewBox="0 0 18 18" className="absolute top-[8px] size-[18px] -translate-x-1/2" style={{ left: frameX(frame) }}>
      <path d="M9 0v18L0 9z" fill="#8a8a8a" />
      <path d="M9 0v18l9-9z" fill="#c0c0c0" />
    </svg>
  );
}

function Tracks() {
  return (
    <div className="relative flex min-w-0 flex-1 flex-col overflow-hidden border-l-2 border-black bg-[#282828]">
      <div className="mt-[66px] flex h-5 border-t-2 border-black bg-[#1d1d1d]">
        <span className="mt-0.5 h-4 w-3.5 rounded-l-full bg-[#2d8ceb]" />
        <span className="h-[18px] w-[393px] border-b-2 border-black bg-[#686868] pl-7">
          <span className="block h-4 w-0.5 bg-[#2d8ceb]" />
        </span>
        <span className="mt-0.5 h-4 w-3 rounded-r-full bg-[#2d8ceb]" />
        <span className="mr-3 flex-1 border border-[#4d4030] bg-[#3f3c34]" />
      </div>
      <div className="relative h-[38px] text-[20px] leading-[30px] text-[#9d9d9d]">
        {ruler.map((label, i) => (
          <span key={i} className="absolute flex h-full -translate-x-1/2 flex-col items-center justify-between" style={{ left: frameX(i * 10) }}>
            {label}
            <span className={`w-0.5 bg-[#9d9d9d] ${i % 3 === 0 ? "-mt-2 h-4" : "h-2.5"}`} />
          </span>
        ))}
      </div>
      <div className="flex h-[34px] border-y-2 border-black">
        <span className="mr-0.5 ml-0.5 w-3 rounded-l-full bg-[#2d8ceb]" />
        <span className="flex-1 border-t-2 border-[#6c6c6c] bg-[#5f5f5f]" />
      </div>
      <div className="flex h-2 border-b-2 border-black">
        <span className="ml-[62px] w-12 bg-[#16bd22]" />
        <span className="ml-20 flex-1 bg-[#16bd22]" />
      </div>
      <div className="relative flex flex-1 flex-col">
        <div className="ml-4 flex-1 bg-[#333]">
          {layers.map((l) => (
            <div key={l.index}>
              <div className={`h-[34px] border-b-4 ${l.bar}`} />
              <div className="relative -ml-4 h-[34px] border-b-2 border-[#222]">
                <Keyframe frame={0} />
                <Keyframe frame={10} />
              </div>
            </div>
          ))}
        </div>
        <span className="absolute top-0 bottom-0 left-[92px] w-4 bg-white/10" />
      </div>
      <svg viewBox="0 0 22 28" className="absolute top-[95px] left-[84px] h-7 w-[22px]" fill="#2d8ceb">
        <path d="M0 0h22v14l-9 14h-4L0 14z" />
        <path d="M10 13h3v15h-3z" fill="#1b4f86" />
      </svg>
      <span className="absolute top-[122px] bottom-0 left-[94px] w-0.5 bg-[#2d8ceb]" />
    </div>
  );
}

function TimelineTools() {
  return (
    <div className="flex flex-1 items-center justify-end gap-6 pr-8 pb-2.5 text-[#b0b0b0]">
      <button aria-label="Mini flowchart" className="w-11">
        <Ico className="h-7 w-9" box="0 0 36 28">
          <path d="M0 4h8v2H0zM6 1h9v8H6zM22 1h9v8h-9zM22 14h9v8h-9zM24 24h10l-5 5z" />
          <Line d="M15 5h7M18 5v13h4" />
        </Ico>
      </button>
      <button aria-label="Draft 3D" className="w-11">
        <Ico className="h-9 w-9" box="0 0 36 36">
          <circle cx="10" cy="10" r="5" />
          <Line d="M10 0v20M0 10h20M3 3l14 14M17 3L3 17" w={1} />
          <Line d="M24 13l10 5v12l-10 5-10-5V18zM14 18l10 6 10-6M24 24v11" />
        </Ico>
      </button>
      <button aria-label="Hide shy layers" className="ml-1 w-8">
        <Ico className="h-6 w-8" box="0 0 32 26">
          <path d="M0 15h32v11H0z" fill="#666" />
          <path d="M6 10a10 9 0 0 1 20 0l3 3H3z" />
          <path d="M10 6h4v5h-4zM18 6h4v5h-4z" fill="#282828" />
          <path d="M14 12h4v11h-4z" />
        </Ico>
      </button>
      <button aria-label="Frame blending" className="w-7">
        <FilmIcon className="size-7" />
      </button>
      <button aria-label="Motion blur" className="w-8 text-[#2d8ceb]">
        <CirclesIcon className="size-8" fill="#1e4f88" />
      </button>
      <button aria-label="Graph editor" className="ml-3 w-8">
        <Ico>
          <Line d="M3 6h26v24H3zM9 6V1M16 6V1M23 6V1M0 12h3M0 20h3M0 27h3M7 12c9 0 6 13 17 13" />
        </Ico>
      </button>
    </div>
  );
}

function Timeline() {
  return (
    <section className="flex flex-1 flex-col bg-[#282828]">
      <div className="flex flex-1">
        <div className="flex w-[2142px] shrink-0 flex-col">
          <div className="flex h-[52px] items-end text-[21px] text-[#9d9d9d]">
            <button className="ml-[56px] h-10 w-[220px] text-left">
              <span className="block h-10">Render Queue</span>
            </button>
            <div className="flex h-10 w-[184px] items-start border-b-4 border-[#b8b8b8] text-[#c8c8c8]">
              <Ico box="0 0 10 10" className="mt-[12px] size-2.5 text-[#9d9d9d]">
                <Line d="M1 1l8 8M9 1l-8 8" />
              </Ico>
              <span className="mt-1.5 ml-5 size-5 bg-[#a89878]" />
              <button className="ml-[22px]">Comp 1</button>
              <Burger className="mt-2 mr-0.5 ml-auto" />
            </div>
          </div>
          <div className="flex h-[74px] items-center pt-3">
            <div className="w-[204px] pb-2 pl-6 text-[#3d9be0]">
              <div className="pl-1 text-[29px] leading-8 font-bold">0;00;00;05</div>
              <div className="text-[19px] leading-6 text-[#1f659f]">00005 (29.97 fps)</div>
            </div>
            <label className="mb-3 flex h-[38px] w-[1536px] items-center rounded border-2 border-[#303030] bg-[#161616] pl-2.5 text-[#b0b0b0]">
              <MagnifierIcon />
              <input aria-label="Search layers" className="w-full bg-transparent outline-none" />
            </label>
            <TimelineTools />
          </div>
          <ListHeader />
          {layers.map((l) => (
            <div key={l.index}>
              <LayerRow layer={l} />
              <ScaleRow />
            </div>
          ))}
        </div>
        <Tracks />
        <div className="w-[38px] bg-[#242424] pt-[130px] pl-2 text-[#b0b0b0]">
          <Ico className="h-7 w-6" box="0 0 24 28">
            <path d="M0 0h24v18L12 28 0 18z" />
          </Ico>
          <Ico className="mt-3 -ml-1 h-7 w-7" box="0 0 28 28">
            <path d="M16 6h12v15H16z" />
            <Line d="M0 17L16 2v15" />
            <circle cx="13" cy="21" r="6" fill="#282828" stroke="currentColor" strokeWidth="2" />
          </Ico>
        </div>
      </div>
      <div className="flex h-[38px] border-t-2 border-black pb-1">
        <div className="flex w-[2142px] shrink-0 items-center gap-1 pl-2.5 text-[#2d8ceb]">
          <button aria-label="Layer switches pane" className="flex h-8 w-8 items-center justify-center border-2 border-[#333] bg-[#222]">
            <Ico className="size-[22px]" box="0 0 22 22">
              <Line d="M5 13H1V1h12v4M9 17H5V5h12v4M9 9h12v12H9z" />
              <circle cx="15" cy="15" r="2" />
            </Ico>
          </button>
          <button aria-label="Transfer controls pane" className="flex h-8 w-8 items-center justify-center border-2 border-[#333] bg-[#222]">
            <Ico className="size-[22px]" box="0 0 22 22">
              <circle cx="8" cy="8" r="7" fill="none" stroke="currentColor" strokeWidth="2" />
              <Line d="M9 9h12v12H9z" />
              <path d="M9 9h6c0 4-2 6-6 6z" />
            </Ico>
          </button>
          <button aria-label="Time stretch pane" className="ml-1 text-[#b0b0b0]">
            <Ico className="h-[22px] w-6" box="0 0 24 22">
              <path d="M6 0h12v22H6z" fill="#666" />
              <path d="M5 0h3v8l-4 3 4 3v8H5v-7l-5-4 5-4zM19 0h-3v8l4 3-4 3v8h3v-7l5-4-5-4z" />
            </Ico>
          </button>
        </div>
        <div className="flex w-[216px] items-center pl-3 text-[#b0b0b0]">
          <Ico className="h-3 w-5" box="0 0 20 12">
            <path d="M0 12l6-8 3 3 4-7 7 12z" />
          </Ico>
          <input
            type="range"
            aria-label="Timeline zoom"
            defaultValue={74}
            className="mr-6 ml-8 h-5 w-[86px] appearance-none bg-[linear-gradient(#444,#444)] bg-[length:100%_4px] bg-center bg-no-repeat [&::-webkit-slider-thumb]:size-5 [&::-webkit-slider-thumb]:appearance-none [&::-webkit-slider-thumb]:rounded-full [&::-webkit-slider-thumb]:border-4 [&::-webkit-slider-thumb]:border-[#999] [&::-webkit-slider-thumb]:bg-[#282828]"
          />
          <Ico className="h-5 w-9" box="0 0 36 20">
            <path d="M0 20L10 5h3L4 20zM9 20L20 0l14 20z" />
          </Ico>
        </div>
        <div className="mr-[38px] flex-1 bg-[#1d1d1d] p-0.5">
          <div className="h-full w-[326px] rounded-full bg-[#303030]" />
        </div>
      </div>
    </section>
  );
}

/* ---------- composition settings dialog ---------- */

const arrows = [-45, 0, 45, -90, null, 90, -135, 180, 135];
const turns: Record<string, string> = {
  "-45": "-rotate-45",
  "0": "rotate-0",
  "45": "rotate-45",
  "-90": "-rotate-90",
  "90": "rotate-90",
  "-135": "-rotate-135",
  "180": "rotate-180",
  "135": "rotate-135",
};

function Value({ label, value, unit = "", className }: { label: string; value: string; unit?: string; className: string }) {
  return (
    <div className="flex">
      <span className={`text-right ${className}`}>{label}</span>
      <button className="ml-3.5 text-[#3d9be0]">{value}</button>
      <span className="ml-1">{unit}</span>
    </div>
  );
}

function CompositionSettings() {
  return (
    <div
      role="dialog"
      aria-label="Composition Settings"
      className="absolute top-[1318px] bottom-0 left-[684px] flex w-[1176px] flex-col rounded-t-lg bg-[#282828] text-[21px] text-[#9d9d9d] shadow-[0_10px_50px_rgba(0,0,0,0.6)]"
    >
      <h2 className="h-[44px] rounded-t-lg border-b border-[#aaa] bg-linear-to-b from-[#e6e6e6] to-[#d0d0d0] text-center font-['Inter',sans-serif] text-[26px] leading-[44px] text-[#444]">
        Composition Settings
      </h2>
      <label className="mt-[30px] flex items-center">
        <span className="w-[410px] text-right">Composition Name:</span>
        <input defaultValue="Comp 1" className="ml-[11px] h-10 w-[540px] rounded border-2 border-[#303030] bg-[#161616] px-2 text-[#c8c8c8] outline-none" />
      </label>
      <div className="mx-[30px] mt-[20px] flex-1 overflow-hidden rounded-t border-x-2 border-t-2 border-[#303030]">
        <div className="mt-2.5 flex pl-[26px]">
          <button className="h-[40px] w-[105px] text-left">
            <span className="block h-[40px] leading-9">Basic</span>
          </button>
          <button className="h-[40px] border-b-4 border-[#2d8ceb] leading-9 text-[#c8c8c8]">Advanced</button>
          <button className="ml-[55px] h-[40px] leading-9">
            <span className="block h-[40px]">3D Renderer</span>
          </button>
        </div>
        <div className="mt-[25px] flex items-center">
          <span className="w-[243px] text-right">Anchor:</span>
          <div className="ml-3.5 grid grid-cols-3 gap-1">
            {arrows.map((a, i) => (
              <button key={i} aria-label={`Anchor ${i + 1}`} className="flex size-[42px] items-center justify-center rounded border-2 border-[#303030] bg-[#1b1b1b] text-[#b0b0b0]">
                {a !== null && (
                  <Ico className={`size-7 ${turns[a]}`} box="0 0 28 28">
                    <path d="M14 0l8 15h-6v13h-4V15H6z" />
                  </Ico>
                )}
              </button>
            ))}
          </div>
        </div>
        <div className="mt-[22px] flex flex-col gap-[7px] pl-[78px]">
          <label className="flex items-center gap-1.5">
            <input type="checkbox" className="size-7 appearance-none rounded border-4 border-[#8a8a8a]" />
            Preserve frame rate when nested or in render queue
          </label>
          <label className="flex items-center gap-1.5">
            <input type="checkbox" className="size-7 appearance-none rounded border-4 border-[#8a8a8a]" />
            Preserve resolution when nested
          </label>
        </div>
        <fieldset className="mt-[22px] mr-[26px] ml-[19px] h-[300px] rounded border-2 border-[#303030] pl-[26px]">
          <legend className="-ml-[20px] pr-4 pl-2.5">Motion Blur</legend>
          <div className="mt-[15px] flex">
            <div className="w-[284px]">
              <Value label="Shutter Angle:" value="360" unit="°" className="w-[196px]" />
            </div>
            <Value label="Shutter Phase:" value="-90" unit="°" className="w-[272px]" />
          </div>
          <hr className="mt-[26px] mr-[30px] border-[#333]" />
          <div className="mt-[26px] flex">
            <div className="w-[284px]">
              <Value label="Samples Per Frame:" value="16" className="w-[196px]" />
            </div>
            <Value label="Adaptive Sample Limit:" value="128" className="w-[272px]" />
          </div>
          <p className="mt-[26px] text-[19px] leading-7">
            Samples Per Frame controls the number of motion blur samples for Classic 3D layers, shape layers, and certain
            <br />
            effects. 2D layer motion automatically uses more samples per frame when needed, up to the value specified by
            <br />
            Adaptive Sample Limit.
          </p>
        </fieldset>
      </div>
    </div>
  );
}

/* ---------- page ---------- */

export default function App() {
  return (
    <div className="relative flex min-h-screen flex-col overflow-hidden bg-[#161616] font-['Open_Sans','Noto_Sans',sans-serif] text-[21px]">
      <MenuBar />
      <header className="relative flex h-8 items-center justify-center rounded-t-lg border-b border-[#ccc] bg-[#f6f6f6] font-['Inter',sans-serif] text-[22px] text-[#b0b0b0]">
        <span className="absolute left-3 flex gap-3.5">
          <span className="flex size-[22px] items-center justify-center rounded-full border border-[#ccc] bg-[#dcdcdc]">
            <span className="size-1.5 rounded-full bg-[#555]" />
          </span>
          <span className="size-[22px] rounded-full border border-[#ccc] bg-[#dcdcdc]" />
          <span className="size-[22px] rounded-full border border-[#ccc] bg-[#dcdcdc]" />
        </span>
        Adobe After Effects 2020 - Untitled Project *
      </header>
      <ToolBar />
      <main className="flex min-h-[860px] gap-2">
        <ProjectPanel />
        <CompositionPanel />
        <RightColumn />
      </main>
      <div className="h-2" />
      <Timeline />
      <CompositionSettings />
    </div>
  );
}
